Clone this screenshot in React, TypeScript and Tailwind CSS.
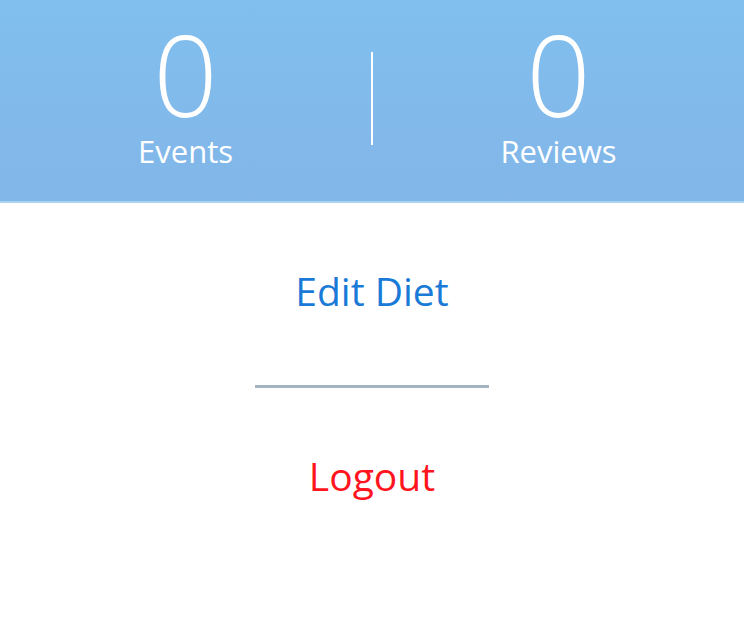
export default function App() {
  return (
    <div className="w-[744px] h-[620px] bg-white font-['Open_Sans','DejaVu_Sans',sans-serif]">
      {/* Stats header */}
      <div className="h-[203px] flex items-start bg-gradient-to-b from-[#80bfee] to-[#82b6e8] border-b-2 border-[#a9d3f3]">
        <div className="flex-1 flex flex-col items-center text-white pt-[17px]">
          <div className="text-[113px] font-light leading-[112px]">0</div>
          <div className="text-[31px] leading-[36px] mt-[4px]">Events</div>
        </div>
        <div className="w-[2px] h-[93px] bg-white mt-[52px]" />
        <div className="flex-1 flex flex-col items-center text-white pt-[17px]">
          <div className="text-[113px] font-light leading-[112px]">0</div>
          <div className="text-[31px] leading-[36px] mt-[4px]">Reviews</div>
        </div>
      </div>

      {/* Actions */}
      <div className="flex flex-col items-center">
        <button className="mt-[60px] text-[39px] leading-[56px] text-[#1a7ad8]">Edit Diet</button>
        <div className="w-[234px] h-[3px] bg-[#a3b4c0] mt-[66px]" />
        <button className="mt-[60px] text-[39px] leading-[56px] text-[#ff1420]">Logout</button>
      </div>
    </div>
  )
}
